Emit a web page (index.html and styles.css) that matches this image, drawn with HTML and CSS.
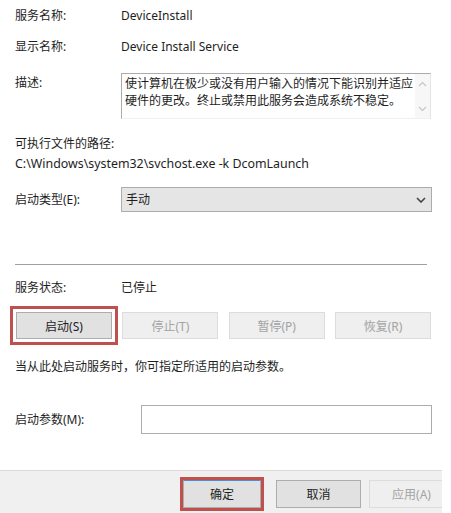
FILE: index.html
```html
<!DOCTYPE html>
<html lang="zh-CN">

<head>
    <meta charset="UTF-8">
    <title>DeviceInstall 的属性</title>
    <link rel="stylesheet" href="styles.css">
</head>

<body>
    <div class="dialog">
        <div class="content">
            <!-- 基本信息 -->
            <div class="row row-name">
                <span class="label">服务名称:</span>
                <span class="value">DeviceInstall</span>
            </div>
            <div class="row row-display">
                <span class="label">显示名称:</span>
                <span class="value">Device Install Service</span>
            </div>
            <div class="row row-desc">
                <span class="label">描述:</span>
                <div class="desc-box">
                    <p class="desc-text">使计算机在极少或没有用户输入的情况下能识别并适应硬件的更改。终止或禁用此服务会造成系统不稳定。</p>
                    <div class="scroll">
                        <svg width="9" height="6" viewBox="0 0 9 6"><path d="M1 5 L4.5 1.5 L8 5" fill="none" stroke="#c6c6c6" stroke-width="1.2"/></svg>
                        <svg width="9" height="6" viewBox="0 0 9 6"><path d="M1 1 L4.5 4.5 L8 1" fill="none" stroke="#c6c6c6" stroke-width="1.2"/></svg>
                    </div>
                </div>
            </div>

            <p class="path-label">可执行文件的路径:</p>
            <p class="path">C:\Windows\system32\svchost.exe -k DcomLaunch</p>

            <div class="row row-type">
                <span class="label">启动类型(E):</span>
                <div class="select">
                    <span>手动</span>
                    <svg width="10" height="6" viewBox="0 0 10 6"><path d="M1 1 L5 5 L9 1" fill="none" stroke="#444" stroke-width="1.6"/></svg>
                </div>
            </div>

            <div class="sep"></div>

            <!-- 服务状态 -->
            <div class="row row-status">
                <span class="label">服务状态:</span>
                <span class="value">已停止</span>
            </div>
            <div class="btn-list">
                <span class="btn marked">启动(S)</span>
                <span class="btn disabled">停止(T)</span>
                <span class="btn disabled">暂停(P)</span>
                <span class="btn disabled">恢复(R)</span>
            </div>
            <p class="hint">当从此处启动服务时，你可指定所适用的启动参数。</p>

            <div class="row row-param">
                <span class="label">启动参数(M):</span>
                <div class="input"></div>
            </div>
        </div>

        <div class="footer">
            <span class="btn ok marked">确定</span>
            <span class="btn">取消</span>
            <span class="btn disabled">应用(A)</span>
        </div>
    </div>
</body>

</html>
```

FILE: styles.css
```css
* {
    padding: 0;
    margin: 0;
    box-sizing: border-box;
}

body {
    background: #fff;
    font-family: "Noto Sans", "Noto Sans CJK SC", sans-serif;
    font-size: 12px;
    color: #1e1e1e;
}

.dialog {
    width: 442px;
    height: 513px;
    overflow: hidden;
}

.content {
    padding: 8px 0 0 15px;
    height: 470px;
}

.row {
    display: flex;
    align-items: center;
    line-height: 16px;
}

.row .label {
    width: 106px;
    flex-shrink: 0;
}

.row-display {
    margin-top: 15px;
}

.row-desc {
    margin-top: 18px;
    align-items: flex-start;
}

.row-desc .label {
    padding-top: 2px;
}

.desc-box {
    width: 310px;
    height: 46px;
    border: 1px solid #ababab;
    border-right-color: #e4e4e4;
    border-bottom-color: #f0f0f0;
    display: flex;
}

.desc-text {
    flex: 1;
    padding: 1px 0 0 3px;
    line-height: 17px;
}

.scroll {
    width: 15px;
    background: #f7f7f7;
    display: flex;
    flex-direction: column;
    justify-content: space-between;
    align-items: center;
    padding: 7px 0 6px;
}

.path-label {
    margin-top: 17px;
    line-height: 16px;
}

.path {
    margin-top: 4px;
    line-height: 16px;
    font-size: 12.4px;
}

.row-type {
    margin-top: 15px;
}

.select {
    width: 311px;
    height: 25px;
    background: #e5e5e5;
    border: 1px solid #acacac;
    display: flex;
    align-items: center;
    justify-content: space-between;
    padding: 0 5px 0 4px;
}

.sep {
    width: 412px;
    height: 1px;
    background: #a0a0a0;
    margin-top: 52px;
}

.row-status {
    margin-top: 15px;
}

.btn-list {
    display: flex;
    justify-content: space-between;
    width: 415px;
    margin: 16px 0 0 1px;
}

.btn {
    display: flex;
    align-items: center;
    justify-content: center;
    width: 96px;
    height: 27px;
    background: #e1e1e1;
    border: 1px solid #adadad;
}

.btn.disabled {
    background: #efefef;
    border-color: #dcdcdc;
    color: #a3a3a3;
}

.btn.marked {
    outline: 3px solid #c0504d;
    outline-offset: 3px;
}

.hint {
    margin-top: 20px;
    line-height: 16px;
}

.row-param {
    margin-top: 30px;
}

.row-param .label {
    width: 126px;
}

.input {
    width: 291px;
    height: 29px;
    border: 1px solid #acacac;
}

.footer {
    height: 43px;
    background: #f0f0f0;
    border-top: 1px solid #dadada;
    display: flex;
    padding: 9px 0 0 183px;
    gap: 8px;
}

.footer .btn {
    width: 85px;
    height: 28px;
    flex-shrink: 0;
}

.footer .ok {
    width: 78px;
    border-top-color: #4a90d6;
    outline-offset: 0;
    margin-right: 7px;
}
```
